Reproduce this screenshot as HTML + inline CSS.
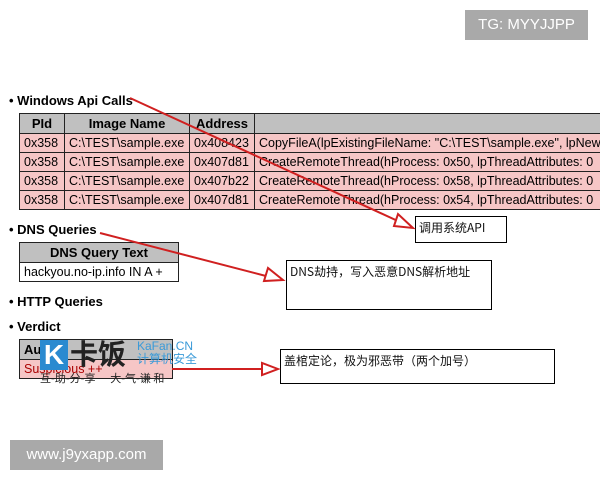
<!DOCTYPE html>
<html><head><meta charset="utf-8"><style>
body{margin:0;width:600px;height:480px;background:#fff;position:relative;overflow:hidden;font-family:"Liberation Sans","Noto Sans CJK SC",sans-serif;}
.a{position:absolute}
.h{font-weight:bold;font-size:13px;color:#000}
table{border-collapse:collapse;position:absolute;font-size:12.5px}
td,th{border:1px solid #222;padding:0 4px;height:18px;white-space:nowrap}
th{background:#c0c0c0;font-weight:bold;font-size:13px;height:19px}
td{background:#f6c6c6}
.box{position:absolute;border:1px solid #000;background:#fff;font-family:"Noto Sans CJK SC",sans-serif;font-size:12px;padding:2px 3px;box-sizing:border-box;color:#111}
.badge{position:absolute;background:#a9a9a9;color:#fff;font-size:15px;text-align:center}
</style></head><body>
<div class="badge" style="left:465px;top:10px;width:123px;height:30px;line-height:30px">TG: MYYJJPP</div>
<div class="a h" style="left:9px;top:93px">• Windows Api Calls</div>
<table style="left:19px;top:113px;width:590px">
<tr><th style="width:36px">PId</th><th style="width:116px">Image Name</th><th style="width:56px">Address</th><th></th></tr>
<tr><td>0x358</td><td>C:\TEST\sample.exe</td><td>0x408423</td><td>CopyFileA(lpExistingFileName: "C:\TEST\sample.exe", lpNew</td></tr>
<tr><td>0x358</td><td>C:\TEST\sample.exe</td><td>0x407d81</td><td>CreateRemoteThread(hProcess: 0x50, lpThreadAttributes: 0</td></tr>
<tr><td>0x358</td><td>C:\TEST\sample.exe</td><td>0x407b22</td><td>CreateRemoteThread(hProcess: 0x58, lpThreadAttributes: 0</td></tr>
<tr><td>0x358</td><td>C:\TEST\sample.exe</td><td>0x407d81</td><td>CreateRemoteThread(hProcess: 0x54, lpThreadAttributes: 0</td></tr>
</table>
<div class="a h" style="left:9px;top:222px">• DNS Queries</div>
<table style="left:19px;top:242px;width:160px">
<tr><th>DNS Query Text</th></tr>
<tr><td style="background:#fff">hackyou.no-ip.info IN A +</td></tr>
</table>
<div class="a h" style="left:9px;top:294px">• HTTP Queries</div>
<div class="a h" style="left:9px;top:319px">• Verdict</div>
<table style="left:19px;top:339px;width:154px">
<tr><th style="text-align:left">Au</th></tr>
<tr><td style="color:#a00">Suspicious ++</td></tr>
</table>
<div class="a" style="left:40px;top:340px;width:28px;height:30px;background:#2a8ad0;color:#fff;font-weight:bold;font-size:28px;line-height:30px;text-align:center">K</div>
<div class="a" style="left:70px;top:336px;font-size:28px;font-weight:bold;color:#222;font-family:'Noto Sans CJK SC',sans-serif;line-height:34px">卡饭</div>
<div class="a" style="left:137px;top:340px;font-size:12px;color:#3a9ad8;line-height:13px">KaFan.CN<br>计算机安全</div>
<div class="a" style="left:40px;top:370px;font-size:11px;color:#222;font-family:'Noto Sans CJK SC',sans-serif">互-助-分-享 &nbsp;&nbsp;&nbsp;&nbsp;&nbsp;大-气-谦 和</div>
<div class="box" style="left:415px;top:216px;width:92px;height:27px">调用系统API</div>
<div class="box" style="left:286px;top:260px;width:206px;height:50px">DNS劫持，写入恶意DNS解析地址</div>
<div class="box" style="left:280px;top:349px;width:275px;height:35px">盖棺定论，极为邪恶带（两个加号）</div>
<svg class="a" style="left:0;top:0" width="600" height="480">
<g stroke="#d02020" stroke-width="2" fill="none">
<line x1="130" y1="98" x2="400" y2="222"/>
<polygon points="413,228 398,214 394,226" fill="#fff"/>
<line x1="100" y1="233" x2="266" y2="276"/>
<polygon points="283,280 268,268 264,281" fill="#fff"/>
<line x1="172" y1="369" x2="262" y2="369"/>
<polygon points="278,369 262,363 262,375" fill="#fff"/>
</g></svg>
<div class="badge" style="left:10px;top:440px;width:153px;height:30px;line-height:30px">www.j9yxapp.com</div>
</body></html>
